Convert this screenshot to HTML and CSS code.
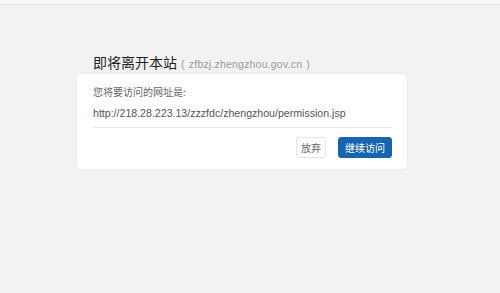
FILE: index.html
```html
<!DOCTYPE html>
<html lang="zh">
<head>
<meta charset="utf-8">
<link rel="stylesheet" href="styles.css">
</head>
<body>
<div class="topbar"></div>
<main class="wrap">
  <div class="head">
    <h1 class="title">即将离开本站</h1>
    <span class="domain">( zfbzj.zhengzhou.gov.cn )</span>
  </div>
  <section class="card">
    <p class="label">您将要访问的网址是:</p>
    <p class="url">http://218.28.223.13/zzzfdc/zhengzhou/permission.jsp</p>
    <div class="actions">
      <button class="btn btn-cancel">放弃</button>
      <button class="btn btn-go">继续访问</button>
    </div>
  </section>
</main>
</body>
</html>
```
FILE: styles.css
```css
html, body {
  margin: 0;
  padding: 0;
  background: #f2f2f2;
  height: 100%;
}
body {
  font-family: "Noto Sans CJK SC", "Liberation Sans", sans-serif;
}
.topbar {
  height: 4px;
  background: #f7f7f7;
  border-bottom: 1px solid #e2e2e2;
}
.wrap {
  width: 330px;
  margin: 0 0 0 77px;
}
.head {
  display: flex;
  align-items: baseline;
  gap: 4px;
  padding: 45px 0 0 16px;
  height: 24px;
}
.title {
  margin: 0;
  font-size: 14px;
  font-weight: normal;
  color: #222;
  line-height: 24px;
}
.domain {
  font-family: "Liberation Sans", sans-serif;
  font-size: 10.5px;
  color: #9a9a9a;
  letter-spacing: 0.2px;
  word-spacing: 1px;
}
.card {
  background: #fff;
  border-radius: 4px;
  box-shadow: 0 0 2px rgba(0,0,0,0.08);
  padding: 11px 15px 11px 16px;
}
.label {
  margin: 0;
  font-size: 10px;
  line-height: 14px;
  color: #666;
}
.url {
  margin: 7px 0 0;
  font-family: "Liberation Sans", sans-serif;
  font-size: 10.6px;
  line-height: 14px;
  color: #555;
  padding-bottom: 7px;
  border-bottom: 1px solid #e6e6e6;
}
.actions {
  display: flex;
  justify-content: flex-end;
  gap: 12px;
  margin-top: 9px;
}
.btn {
  font-family: "Noto Sans CJK SC", sans-serif;
  font-size: 10px;
  height: 21px;
  border-radius: 3px;
  cursor: pointer;
}
.btn-cancel {
  background: #fff;
  color: #666;
  border: 1px solid #e3e3e3;
  padding: 0 4px;
}
.btn-go {
  background: #1764b0;
  color: #fff;
  border: 1px solid #1764b0;
  padding: 0 6px;
}
```
